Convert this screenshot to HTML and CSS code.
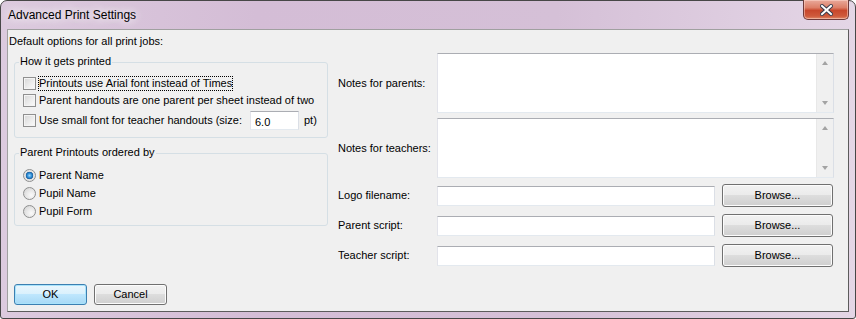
FILE: index.html
```html
<!DOCTYPE html>
<html lang="en">
<head>
    <meta charset="UTF-8">
    <title>Advanced Print Settings</title>
    <link rel="stylesheet" href="styles.css">
</head>
<body>
    <div class="window">
        <div class="titlebar">
            <span class="title">Advanced Print Settings</span>
            <button class="close" aria-label="Close">
                <svg width="13" height="12" viewBox="0 0 13 12">
                    <path d="M2 2 L11 10 M11 2 L2 10" stroke="#3a3a4a" stroke-width="4" stroke-linecap="square"/>
                    <path d="M2 2 L11 10 M11 2 L2 10" stroke="#fff" stroke-width="2" stroke-linecap="square"/>
                </svg>
            </button>
        </div>

        <div class="client">
            <div class="main">
                <div class="left">
                    <p class="heading">Default options for all print jobs:</p>

                    <div class="group">
                        <span class="group-title">How it gets printed</span>
                        <label class="check-row">
                            <span class="checkbox"></span>
                            <span class="focus">Printouts use Arial font instead of Times</span>
                        </label>
                        <label class="check-row">
                            <span class="checkbox"></span>
                            <span>Parent handouts are one parent per sheet instead of two</span>
                        </label>
                        <div class="check-row size-row">
                            <span class="checkbox"></span>
                            <span>Use small font for teacher handouts (size:</span>
                            <input class="textbox size-box" type="text" value="6.0">
                            <span class="unit">pt)</span>
                        </div>
                    </div>

                    <div class="group order-group">
                        <span class="group-title">Parent Printouts ordered by</span>
                        <label class="radio-row"><span class="radio checked"></span>Parent Name</label>
                        <label class="radio-row"><span class="radio"></span>Pupil Name</label>
                        <label class="radio-row"><span class="radio"></span>Pupil Form</label>
                    </div>
                </div>

                <div class="right">
                    <div class="field-row notes-row">
                        <span class="field-label">Notes for parents:</span>
                        <div class="notes">
                            <textarea></textarea>
                            <div class="scrollbar"><span class="arrow up"></span><span class="arrow down"></span></div>
                        </div>
                    </div>
                    <div class="field-row notes-row">
                        <span class="field-label">Notes for teachers:</span>
                        <div class="notes">
                            <textarea></textarea>
                            <div class="scrollbar"><span class="arrow up"></span><span class="arrow down"></span></div>
                        </div>
                    </div>
                    <div class="field-row path-row">
                        <span class="field-label">Logo filename:</span>
                        <input class="textbox path-box" type="text">
                        <button class="btn browse">Browse...</button>
                    </div>
                    <div class="field-row path-row">
                        <span class="field-label">Parent script:</span>
                        <input class="textbox path-box" type="text">
                        <button class="btn browse">Browse...</button>
                    </div>
                    <div class="field-row path-row">
                        <span class="field-label">Teacher script:</span>
                        <input class="textbox path-box" type="text">
                        <button class="btn browse">Browse...</button>
                    </div>
                </div>
            </div>

            <div class="footer">
                <button class="btn default">OK</button>
                <button class="btn">Cancel</button>
            </div>
        </div>
    </div>
</body>
</html>
```

FILE: styles.css
```css
body {
    margin: 0;
    font-family: "Liberation Sans", Arial, sans-serif;
    font-size: 11px;
    line-height: 13px;
    color: #000;
}

.window {
    width: 856px;
    height: 319px;
    box-sizing: border-box;
    display: flex;
    flex-direction: column;
    padding: 0 6px 6px 6px;
    border: 1px solid #474747;
    border-radius: 7px 7px 3px 3px;
    background: linear-gradient(90deg, #dccade 0%, #d4bdd6 30%, #d5c0d7 65%, #e4d6e6 100%);
}

.titlebar {
    height: 28px;
    display: flex;
    justify-content: space-between;
    align-items: flex-start;
}

.title {
    margin: 7px 0 0 1px;
    font-size: 12px;
    line-height: 15px;
    color: #000;
    text-shadow: 0 0 8px #fff, 0 0 12px rgba(255, 255, 255, 0.9);
}

.close {
    width: 46px;
    height: 20px;
    margin-top: -1px;
    padding: 0;
    display: flex;
    align-items: center;
    justify-content: center;
    border: 1px solid #6e3a3a;
    border-top: none;
    border-radius: 0 0 5px 5px;
    background: linear-gradient(#e9a99b 0%, #dd7f68 40%, #c8472c 55%, #cf5a3c 85%, #e08a6a 100%);
    box-shadow: inset 0 0 0 1px rgba(255, 220, 210, 0.5);
}

.client {
    flex: 1;
    display: flex;
    flex-direction: column;
    background: #f0f0f0;
    border: 1px solid;
    border-color: #a0a0a0 #5c5c5c #5c5c5c #a0a0a0;
}

.main {
    display: flex;
}

.left {
    width: 320px;
    padding-top: 5px;
}

.heading {
    margin: 0 0 14px 1px;
}

.group {
    margin-left: 6px;
    padding: 0 0 6px 8px;
    border: 1px solid #d5dfe5;
    border-radius: 3px;
}

.group-title {
    display: block;
    width: fit-content;
    margin: -8px 0 7px -4px;
    padding: 0 1px;
    background: #f0f0f0;
}

.check-row {
    display: flex;
    align-items: center;
    gap: 2px;
    height: 17px;
}

.size-row {
    height: 21px;
    margin-top: 1px;
}

.checkbox {
    width: 11px;
    height: 11px;
    margin-right: 1px;
    border: 1px solid #8f8f8f;
    background: linear-gradient(135deg, #d6d6d6 0%, #eeeeee 60%, #fbfbfb 100%);
    box-shadow: inset 0 0 0 1px #f4f4f4;
}

.focus {
    outline: 1px dotted #000;
    outline-offset: 0;
}

.textbox {
    box-sizing: border-box;
    height: 20px;
    padding: 2px 4px 0;
    font: inherit;
    border: 1px solid;
    border-color: #abadb3 #dbdfe6 #e3e9ef #e2e3ea;
    background: #fff;
    outline: none;
}

.size-box {
    width: 49px;
    height: 19px;
    margin-left: 6px;
}

.unit {
    margin-left: 3px;
}

.order-group {
    margin-top: 15px;
    padding-bottom: 5px;
}

.radio-row {
    display: flex;
    align-items: center;
    gap: 3px;
    height: 18px;
}

.radio {
    box-sizing: border-box;
    width: 13px;
    height: 13px;
    border: 1px solid #8e8f8f;
    border-radius: 50%;
    background: radial-gradient(circle at 65% 65%, #fafafa 0%, #e6e6e6 50%, #cfcfcf 100%);
}

.radio.checked {
    background: radial-gradient(circle at 50% 50%, #9fd6fa 0%, #2a8ad4 30%, #1d5f9e 45%, #e0e0e0 52%, #f4f4f4 100%);
}

.right {
    flex: 1;
    margin-left: 10px;
    padding: 23px 14px 0 0;
}

.field-row {
    display: flex;
    align-items: center;
}

.field-label {
    width: 99px;
    flex: none;
}

.notes-row {
    margin-bottom: 5px;
}

.notes-row + .notes-row {
    margin-bottom: 6px;
}

.notes {
    flex: 1;
    height: 60px;
    box-sizing: border-box;
    display: flex;
    border: 1px solid;
    border-color: #abadb3 #dbdfe6 #e3e9ef #e2e3ea;
    background: #fff;
}

.notes textarea {
    flex: 1;
    border: none;
    resize: none;
    outline: none;
    font: inherit;
}

.scrollbar {
    width: 17px;
    display: flex;
    flex-direction: column;
    justify-content: space-between;
    align-items: center;
    padding: 7px 0;
    box-sizing: border-box;
    background: #f0f0f0;
    border-left: 1px solid #e8e8e8;
}

.arrow {
    width: 0;
    height: 0;
    border-left: 3px solid transparent;
    border-right: 3px solid transparent;
}

.arrow.up {
    border-bottom: 4px solid #a3a3a3;
}

.arrow.down {
    border-top: 4px solid #a3a3a3;
}

.path-row {
    height: 23px;
    margin-bottom: 7px;
}

.path-box {
    width: 278px;
}

.btn {
    box-sizing: border-box;
    height: 21px;
    width: 73px;
    padding: 0;
    font: inherit;
    color: #000;
    border: 1px solid #707070;
    border-radius: 3px;
    background: linear-gradient(#f2f2f2 0%, #ebebeb 49%, #dddddd 50%, #cfcfcf 100%);
    box-shadow: inset 0 0 0 1px #fcfcfc;
}

.browse {
    width: 111px;
    height: 23px;
    margin-left: 7px;
}

.btn.default {
    border-color: #3c7fb1;
    background: linear-gradient(#eaf6fd 0%, #d9f0fc 49%, #bee6fd 50%, #a7d9f5 100%);
    box-shadow: inset 0 0 0 1px #a9e3fb;
}

.footer {
    margin-top: auto;
    display: flex;
    gap: 7px;
    padding: 0 0 6px 6px;
}
```
